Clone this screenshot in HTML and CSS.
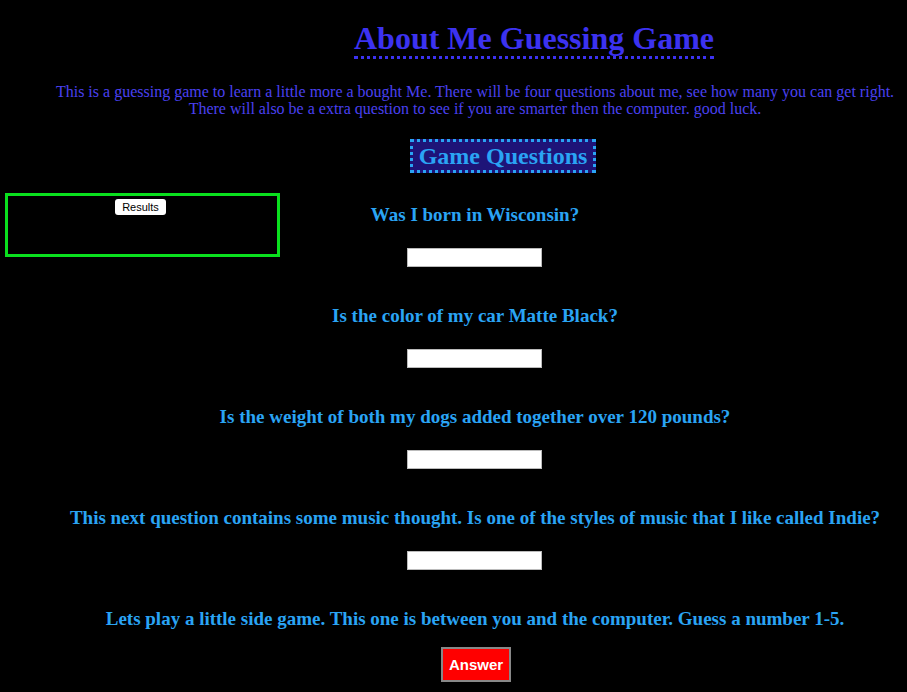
FILE: index.html
```html
<!DOCTYPE html>
<html>
<head>
<meta charset="utf-8">
<title>About Me Guessing Game</title>
<link rel="stylesheet" href="styles.css">
</head>
<body>
<aside class="results-box">
  <button class="results-btn">Results</button>
</aside>
<main class="page">
  <header class="intro">
    <h1 class="title">About Me Guessing Game</h1>
    <p class="lead">This is a guessing game to learn a little more a bought Me. There will be four questions about me, see how many you can get right.<br>There will also be a extra question to see if you are smarter then the computer. good luck.</p>
    <h2 class="section-title">Game Questions</h2>
  </header>
  <section class="questions">
    <div class="question">
      <h3 class="q-text">Was I born in Wisconsin?</h3>
      <input class="q-input" type="text">
    </div>
    <div class="question">
      <h3 class="q-text">Is the color of my car Matte Black?</h3>
      <input class="q-input" type="text">
    </div>
    <div class="question">
      <h3 class="q-text">Is the weight of both my dogs added together over 120 pounds?</h3>
      <input class="q-input" type="text">
    </div>
    <div class="question">
      <h3 class="q-text">This next question contains some music thought. Is one of the styles of music that I like called Indie?</h3>
      <input class="q-input" type="text">
    </div>
    <div class="question">
      <h3 class="q-text">Lets play a little side game. This one is between you and the computer. Guess a number 1-5.</h3>
      <button class="answer-btn">Answer</button>
    </div>
  </section>
</main>
</body>
</html>
```
FILE: styles.css
```css
html, body {
  margin: 0;
  padding: 0;
  background: #000;
}
body {
  font-family: "Liberation Serif", "Times New Roman", serif;
  position: relative;
  min-height: 692px;
}
.results-box {
  position: absolute;
  left: 5px;
  top: 193px;
  width: 269px;
  height: 55px;
  border: 3px solid #0ae01e;
  display: flex;
  justify-content: center;
  align-items: flex-start;
  padding-top: 3px;
  box-sizing: content-box;
}
.results-btn {
  font-family: "Liberation Sans", Arial, sans-serif;
  font-size: 11px;
  background: #fff;
  color: #000;
  border: none;
  border-radius: 3px;
  padding: 1px 7px;
  height: 16px;
  line-height: 14px;
  margin-left: -4px;
}
.page {
  padding-left: 43px;
  text-align: center;
}
.intro {
  display: flex;
  flex-direction: column;
  align-items: center;
  padding-top: 20px;
}
.title {
  margin: 0 0 0 118px;
  font-size: 32px;
  font-weight: bold;
  color: #3c32f0;
  line-height: 36px;
  border-bottom: 3px dotted #3c32f0;
}
.lead {
  margin: 24px 0 0 0;
  font-size: 16px;
  line-height: 17px;
  color: #4a40f0;
}
.section-title {
  margin: 22px 0 0 56px;
  font-size: 24px;
  font-weight: bold;
  color: #2aa4f4;
  background: #1e1478;
  border: 3px dotted #2aa4f4;
  padding: 0 6px;
  line-height: 28px;
}
.questions {
  display: flex;
  flex-direction: column;
  align-items: center;
  padding-top: 31px;
}
.question {
  display: flex;
  flex-direction: column;
  align-items: center;
  height: 101px;
}
.q-text {
  margin: 0;
  font-size: 19px;
  line-height: 22px;
  font-weight: bold;
  color: #2aa4f4;
}
.q-input {
  margin-top: 22px;
  width: 131px;
  height: 15px;
  border: 1px solid #bbb;
  padding: 1px;
  background: #fff;
}
.answer-btn {
  margin-top: 17px;
  margin-left: 2px;
  background: #ff0000;
  color: #fff;
  border: 2px solid #888;
  font-family: "Liberation Sans", Arial, sans-serif;
  font-size: 15px;
  font-weight: bold;
  width: 70px;
  height: 35px;
  padding: 0;
}
```
